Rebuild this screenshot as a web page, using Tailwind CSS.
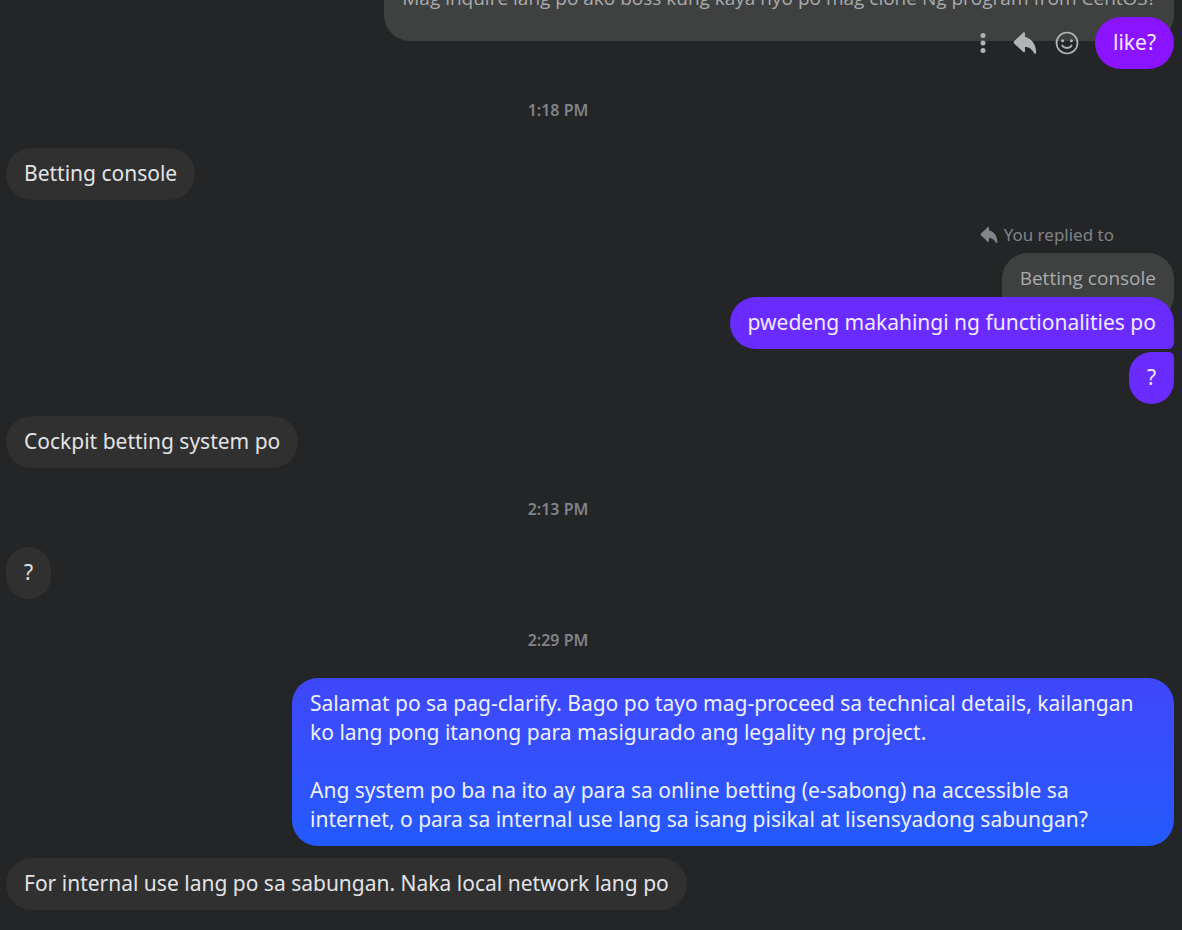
<!DOCTYPE html>
<html lang="tl">
<head>
    <meta charset="UTF-8">
    <meta name="viewport" content="width=device-width, initial-scale=1.0">
    <title>Chat</title>
    <script src="https://cdn.jsdelivr.net/npm/@tailwindcss/browser@4"></script>
</head>
<body class="bg-[#242527] text-[#e2e3e6] font-['Noto_Sans',sans-serif] text-[21px] leading-[29px] min-h-screen overflow-hidden">

    <main class="flex flex-col pl-[6px] pr-2 pb-5">

        <!-- Quoted message -->
        <div class="self-end -mt-[27px] px-[18px] pt-[13px] pb-[30px] rounded-[26px] bg-[#3f4140] text-[#a9abad] font-['Open_Sans',sans-serif] text-[19px] leading-[25px]">Mag inquire lang po ako boss kung kaya nyo po mag clone Ng program from CentOS?</div>

        <!-- Reply with hover actions -->
        <div class="relative self-end flex items-center -mt-6">
            <div class="flex items-center gap-[18px] mr-4 text-[#b1b5ba]">
                <button type="button" aria-label="More" class="size-6">
                    <svg viewBox="0 0 24 24" class="size-6" fill="currentColor"><circle cx="12" cy="4.6" r="2.5"/><circle cx="12" cy="12" r="2.5"/><circle cx="12" cy="19.4" r="2.5"/></svg>
                </button>
                <button type="button" aria-label="Reply" class="size-6">
                    <svg viewBox="0 0 24 24" class="size-6" fill="currentColor"><path d="M10.3 1.5 1.4 10.1a1.8 1.8 0 0 0 0 2.6l8.9 8.3c.7.7 1.7.3 1.7-.7v-4.3c4.2 0 6.8 2 9.2 6.2.6 1 2 .7 2-.5 0-8-4.2-14.2-11.2-16V2.2c0-1-1-1.4-1.7-.7z"/></svg>
                </button>
                <button type="button" aria-label="React" class="size-6">
                    <svg viewBox="0 0 24 24" class="size-6" fill="none" stroke="currentColor" stroke-width="1.7" stroke-linecap="round"><circle cx="12" cy="12" r="10.5"/><circle cx="7.6" cy="9.8" r="1.5" fill="currentColor" stroke="none"/><circle cx="16.4" cy="9.8" r="1.5" fill="currentColor" stroke="none"/><path d="M7.3 14.5c2 3.2 7.4 3.2 9.4 0"/></svg>
                </button>
            </div>
            <div class="px-[18px] pt-[11px] pb-3 rounded-[26px] bg-[#8a14ff] text-[#f6e9ff]">like?</div>
        </div>

        <time class="h-[79px] pt-[29px] pr-[64px] text-center text-[16px] leading-6 font-semibold text-[#808387]">1:18 PM</time>

        <div class="self-start px-[18px] pt-[11px] pb-3 rounded-[26px] bg-[#303030]">Betting console</div>

        <!-- Reply label -->
        <div class="flex justify-end items-center gap-[6px] h-[53px] pt-4 pr-[60px] text-[17px] leading-6 text-[#808387]">
            <svg viewBox="0 0 24 24" class="size-[18px]" fill="currentColor"><path d="M10.3 1.5 1.4 10.1a1.8 1.8 0 0 0 0 2.6l8.9 8.3c.7.7 1.7.3 1.7-.7v-4.3c4.2 0 6.8 2 9.2 6.2.6 1 2 .7 2-.5 0-8-4.2-14.2-11.2-16V2.2c0-1-1-1.4-1.7-.7z"/></svg>
            <span>You replied to</span>
        </div>
        <div class="self-end px-[18px] pt-[13px] pb-[30px] rounded-[26px] bg-[#3f4140] text-[#a9abad] font-['Open_Sans',sans-serif] text-[19px] leading-[25px]">Betting console</div>
        <div class="relative self-end -mt-6 px-[18px] pt-[11px] pb-3 rounded-[26px] rounded-br-[6px] bg-[#6a2bff] text-[#f1e9ff]">pwedeng makahingi ng functionalities po</div>
        <div class="self-end mt-[3px] px-[18px] pt-[11px] pb-3 rounded-[26px] rounded-tr-[6px] bg-[#6a2bff] text-[#f1e9ff]">?</div>

        <div class="self-start mt-3 px-[18px] pt-[11px] pb-3 rounded-[26px] bg-[#303030]">Cockpit betting system po</div>

        <time class="h-[79px] pt-[29px] pr-[64px] text-center text-[16px] leading-6 font-semibold text-[#808387]">2:13 PM</time>

        <div class="self-start px-[18px] pt-[11px] pb-3 rounded-[26px] bg-[#303030]">?</div>

        <time class="h-[79px] pt-[29px] pr-[64px] text-center text-[16px] leading-6 font-semibold text-[#808387]">2:29 PM</time>

        <div class="self-end max-w-[882px] px-[18px] pt-[11px] pb-3 rounded-[26px] bg-linear-to-b from-[#3f47fb] to-[#225afb] text-[#eef0ff]">
            <p>Salamat po sa pag-clarify. Bago po tayo mag-proceed sa technical details, kailangan ko lang pong itanong para masigurado ang legality ng project.</p>
            <p class="mt-[29px]">Ang system po ba na ito ay para sa online betting (e-sabong) na accessible sa internet, o para sa internal use lang sa isang pisikal at lisensyadong sabungan?</p>
        </div>

        <div class="self-start mt-3 px-[18px] pt-[11px] pb-3 rounded-[26px] bg-[#303030]">For internal use lang po sa sabungan. Naka local network lang po</div>

    </main>

</body>
</html>
